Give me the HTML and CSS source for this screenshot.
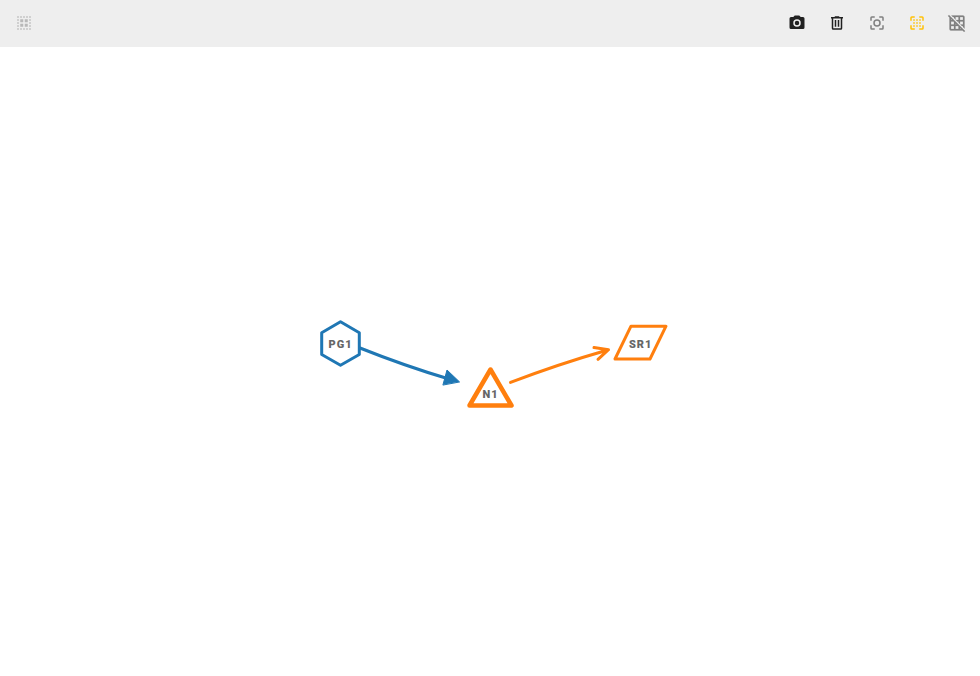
FILE: index.html
```
<!DOCTYPE html>
<html lang="en">
<head>
<meta charset="utf-8">
<title>Graph editor</title>
<link rel="stylesheet" href="styles.css">
</head>
<body>
<header class="toolbar">
  <button class="tool tool-disabled" aria-label="Select group"><svg viewBox="0 0 24 24"><path d="M3 3h2v2H3zM7 3h2v2H7zM11 3h2v2h-2zM15 3h2v2h-2zM19 3h2v2h-2zM3 7h2v2H3zM19 7h2v2h-2zM3 11h2v2H3zM19 11h2v2h-2zM3 15h2v2H3zM19 15h2v2h-2zM3 19h2v2H3zM7 19h2v2H7zM11 19h2v2h-2zM15 19h2v2h-2zM19 19h2v2h-2zM7 7h4v4H7zM13 7h4v4h-4zM7 13h4v4H7zM13 13h4v4h-4z"/></svg></button>
  <div class="actions">
    <button class="tool" aria-label="Snapshot"><svg viewBox="0 0 24 24"><path fill-rule="evenodd" d="M4 4h3l2-2h6l2 2h3a2 2 0 0 1 2 2v12a2 2 0 0 1-2 2H4a2 2 0 0 1-2-2V6a2 2 0 0 1 2-2m8 3a5 5 0 1 0 0 10a5 5 0 0 0 0-10m0 2a3 3 0 1 1 0 6a3 3 0 0 1 0-6z"/></svg></button>
    <button class="tool" aria-label="Delete"><svg viewBox="0 0 24 24"><path fill-rule="evenodd" d="M9 3v1H4v2h1v13a2 2 0 0 0 2 2h10a2 2 0 0 0 2-2V6h1V4h-5V3H9M7 6h10v13H7V6m2 2v9h2V8H9m4 0v9h2V8h-2z"/></svg></button>
    <button class="tool tool-muted" aria-label="Center"><svg viewBox="0 0 24 24"><path fill-rule="evenodd" d="M5 15H3v4a2 2 0 0 0 2 2h4v-2H5zM5 5h4V3H5a2 2 0 0 0-2 2v4h2zM19 3h-4v2h4v4h2V5a2 2 0 0 0-2-2M19 19h-4v2h4a2 2 0 0 0 2-2v-4h-2zM12 7a5 5 0 1 0 0 10a5 5 0 0 0 0-10m0 8a3 3 0 1 1 0-6a3 3 0 0 1 0 6z"/></svg></button>
    <button class="tool tool-active" aria-label="Snap to grid"><svg viewBox="0 0 24 24"><path d="M5 15H3v4a2 2 0 0 0 2 2h4v-2H5zM5 5h4V3H5a2 2 0 0 0-2 2v4h2zM19 3h-4v2h4v4h2V5a2 2 0 0 0-2-2M19 19h-4v2h4a2 2 0 0 0 2-2v-4h-2zM7 7h2v2H7zM11 7h2v2h-2zM15 7h2v2h-2zM7 11h2v2H7zM11 11h2v2h-2zM15 11h2v2h-2zM7 15h2v2H7zM11 15h2v2h-2zM15 15h2v2h-2z"/></svg></button>
    <button class="tool tool-muted tool-grid" aria-label="Grid off"><svg viewBox="0 0 24 24"><path d="M8 4v1.45l2 2V4h4v4h-3.45l2 2H14v1.45l2 2V10h4v4h-3.45l2 2H20v1.45l2 2V4a2 2 0 0 0-2-2H4.55l2 2H8m8 0h4v4h-4V4zM1.27 1.27L0 2.55l2 2V20a2 2 0 0 0 2 2h15.46l2 2l1.27-1.27L1.27 1.27zM10 12.55L11.45 14H10v-1.45zM4 6.55L5.45 8H4V6.55zM8 20H4v-4h4v4zm0-6H4v-4h3.45l.55.55V14zm6 6h-4v-4h3.45l.55.54V20zm2 0v-1.46L17.46 20H16z"/></svg></button>
  </div>
</header>
<main class="canvas">
  <svg class="graph" viewBox="0 47 980 629">
    <g class="edge edge-blue">
      <path d="M360 348Q405 366 449 379"/>
      <path class="arrow" d="M459.3 381.7L447 370L443 384.7Z"/>
    </g>
    <g class="edge edge-orange">
      <path d="M510.5 382.4Q557 364.5 608.5 349.7M594 347.6L608.5 349.7L598 359.3"/>
    </g>
    <path class="node node-blue" d="M340.5 321.8L359.3 332.7V354.5L340.5 365.2L321.7 354.5V332.7Z"/>
    <path class="node node-triangle" d="M490.5 369.5L511.5 405.5H469.5Z"/>
    <path class="node node-orange" d="M631 326.2H666L650 359H615Z"/>
    <text class="label" x="340.6" y="348">PG1</text>
    <text class="label" x="490.5" y="398">N1</text>
    <text class="label" x="640.6" y="348">SR1</text>
  </svg>
</main>
</body>
</html>
```
FILE: styles.css
```
body {
  margin: 0;
  height: 100vh;
  display: flex;
  flex-direction: column;
  background: #fff;
  font-family: Roboto, sans-serif;
  overflow: hidden;
}
.toolbar {
  height: 47px;
  flex: none;
  box-sizing: border-box;
  padding: 0 3px 1px 4px;
  display: flex;
  align-items: center;
  justify-content: space-between;
  background: #eee;
}
.actions { display: flex; }
.tool {
  width: 40px;
  height: 40px;
  padding: 0;
  border: 0;
  background: none;
  color: #212121;
  display: flex;
  align-items: center;
  justify-content: center;
}
.tool svg { width: 18px; height: 18px; fill: currentColor; }
.tool-muted { color: #808080; }
.tool-disabled { color: #b8b8b8; }
.tool-active { color: #ffc107; }
.tool-grid svg { stroke: currentColor; stroke-width: 0.3; overflow: visible; }
.canvas { flex: 1; min-height: 0; }
.graph { display: block; width: 100%; height: 100%; }
.edge { fill: none; stroke-width: 3; stroke-linecap: round; stroke-linejoin: round; }
.edge-blue { stroke: #1f77b4; }
.edge-orange { stroke: #ff7f0e; }
.arrow { fill: #1f77b4; stroke-width: 1; stroke-linejoin: miter; }
.node { fill: #fff; stroke-width: 3; stroke-linejoin: round; }
.node-blue { stroke: #1f77b4; }
.node-orange { stroke: #ff7f0e; }
.node-triangle { stroke: #ff7f0e; stroke-width: 4.5; }
.label {
  fill: #666;
  font-size: 11px;
  font-weight: 900;
  letter-spacing: 1px;
  text-anchor: middle;
}
```
